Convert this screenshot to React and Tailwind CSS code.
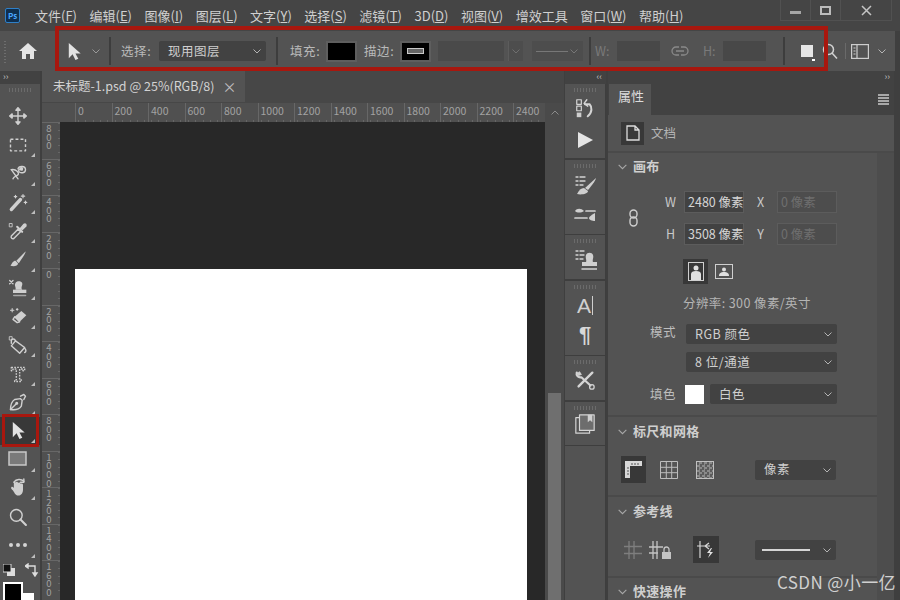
import React from "react";

const Ic = ({ children, s = 20, vb = 24, c = "" }) => (
  <svg width={s} height={s} viewBox={`0 0 ${vb} ${vb}`} fill="none" stroke="currentColor" strokeWidth="1.7" strokeLinecap="round" strokeLinejoin="round" className={c}>
    {children}
  </svg>
);
const Solid = "#cfcfcf";

const Chev = ({ c = "text-[#b4b4b4]", s = 10 }) => (
  <svg width={s} height={s} viewBox="0 0 10 10" fill="none" stroke="currentColor" strokeWidth="1" className={c}><path d="M1.5 3.5 5 7l3.5-3.5" /></svg>
);

const Arrow = ({ s = 20 }) => (
  <svg width={s} height={s} viewBox="0 0 20 20"><path d="M4 1v16l4-4 3 6 3-1.5-3-5.5h5.5z" fill="#e2e2e2" /></svg>
);

const icons = {
  move: <Ic><path d="M12 3v18M3 12h18" /><path d="M12 2l-2.5 3h5zM12 22l-2.5-3h5zM2 12l3-2.5v5zM22 12l-3-2.5v5z" fill={Solid} /></Ic>,
  marquee: <Ic><rect x="3" y="5" width="18" height="14" strokeDasharray="3.5 2.5" strokeLinecap="butt" /></Ic>,
  lasso: <Ic><path d="M4 8c6-1 10 4 8 6-2 2-5 2-6 5" /><path d="M4 8l8 11" /><path d="M12 7c1-4 9-4 9 1 0 4-6 5-8 2-1-2 2-4 4-2" /><circle cx="16" cy="7" r="1.5" fill={Solid} /></Ic>,
  wand: <Ic><path d="M4 21 15 9" strokeWidth="4" /><path d="M18 3v4M16 5h4M9 4v3M7.5 5.5h3M21 11v3M19.5 12.5h3" strokeWidth="1.4" /></Ic>,
  drop: <Ic><path d="M7 21c-2 1-4-1-3-3l8-8 3 3z" /><path d="M11 7l6 6" strokeWidth="2.5" /><path d="M15 9l4-5c2-1 3 0 2.500 2l-4 4z" fill={Solid} /><path d="M2 3h3v4H2z" strokeWidth="1" /></Ic>,
  brush: <Ic><path d="M10 14 21 3c1 1-6 11-8 14z" fill={Solid} stroke="none" /><path d="M9 14c-3 0-4 3-6 6 3 1 9 1 9-3z" fill={Solid} stroke="none" /></Ic>,
  stamp: <Ic><path d="M9 14c1-3-2-5 0-8 1-3 7-3 8 0 1 3-2 5 0 8z" fill={Solid} stroke="none" /><rect x="6" y="14" width="16" height="4" fill={Solid} stroke="none" /><path d="M7 21h14" stroke="#a5a5a5" strokeWidth="2" /><path d="M2 3l4 4M6 3 2 7" strokeWidth="1.600" /></Ic>,
  eraser: <Ic><path d="M8 13 16 6l6 5-8 8z" fill={Solid} stroke="none" /><path d="M8 13l-2 3 5 4 3-1z" /><path d="M5 3v4M3 5h4M11 3v2M10 4h2" strokeWidth="1.300" /></Ic>,
  bucket: <Ic><path d="M9 7l11 8-6 7-10-9z" /><path d="M9 7c-1-3-5-3-5 0v3" /><path d="M20 16c2 2 2 4 0 5" /><path d="M2 2h3v4H2z" strokeWidth="1" /></Ic>,
  type: <Ic><path d="M4 4h16v4h-2V6h-4v13h2v2H8v-2h2V6H6v2H4z" strokeDasharray="2 1.500" strokeLinecap="butt" /></Ic>,
  pen: <Ic><path d="M3 21c0-6 2-10 5-12l7-1 2 2-1 7c-2 3-6 5-13 4z" /><path d="M3 21l7-7" /><circle cx="10.500" cy="13.500" r="1" /><path d="M15 5l4-2 2 2-2 4" /></Ic>,
  rect: <svg width="20" height="16" viewBox="0 0 20 16"><rect x="1" y="1" width="17" height="13" fill="#7a7a7a" stroke="#c8c8c8" strokeWidth="1.500" /></svg>,
  hand: <Ic><path d="M6 15c-2-2-3-3-2-4s2 0 3 1V6c0-2 2-2 2 0 0-2 3-2 3 0 0-1 3-1 3 1 1-1 3 0 3 1v6c0 4-2 7-6 7-3 0-4-3-6-6z" fill={Solid} stroke="none" /><path d="M7 5c3-4 9-4 12-1" /><path d="M19 1v4h-4" /></Ic>,
  zoom: <Ic><circle cx="10" cy="10" r="7" /><path d="m15 15 6.500 6.500" strokeWidth="2.500" /></Ic>,
  dots: <svg width="20" height="6" viewBox="0 0 20 6" fill="#d4d4d4"><circle cx="3" cy="3" r="2" /><circle cx="10" cy="3" r="2" /><circle cx="17" cy="3" r="2" /></svg>,
};

const tools = [
  ["move", 0], ["marquee", 1], ["lasso", 1], ["wand", 1], ["drop", 1], ["brush", 1], ["stamp", 1], ["eraser", 1],
  ["bucket", 1], ["type", 1], ["pen", 1], ["arrow", 1], ["rect", 1], ["hand", 1], ["zoom", 0], ["dots", 1],
];

const Corner = ({ c = "right-[5px] bottom-[2px]" }) => (
  <span className={`absolute ${c} w-0 h-0 border-l-[4px] border-l-transparent border-b-[4px] border-b-[#bdbdbd]`} />
);

const menus = [
  ["文件", "F"], ["编辑", "E"], ["图像", "I"], ["图层", "L"], ["文字", "Y"], ["选择", "S"], ["滤镜", "T"], ["3D", "D"], ["视图", "V"], ["增效工具", null], ["窗口", "W"], ["帮助", "H"],
];

const Grip = () => <div className="h-[4px] w-[22px] mx-auto bg-[repeating-linear-gradient(90deg,#6b6b6b_0,#6b6b6b_1px,transparent_1px,transparent_3px)]" />;

const DarkSelect = ({ w, children, h = "h-[20px]", c = "" }) => (
  <div className={`${w} ${h} ${c} bg-[#424242] rounded-[2px] flex items-center justify-between pl-[9px] pr-[4px] text-[12.5px] text-[#cfcfcf]`}>
    <span className="flex-1">{children}</span>
    <Chev />
  </div>
);

const SectionHead = ({ children }) => (
  <div className="flex items-center h-[16px] pl-[9px] gap-[5px]">
    <Chev c="text-[#a8a8a8]" s={11} />
    <span className="text-[13px] font-bold text-[#cfcfcf] tracking-[0.3px] leading-[16px]">{children}</span>
  </div>
);

const Sep = ({ c = "" }) => <div className={`w-[2px] h-[28px] bg-[#3d3d3d] ${c}`} />;

const xTicks = ["0", "200", "400", "600", "800", "1000", "1200", "1400", "1600", "1800", "2000", "2200", "2400"];
const yTicks = ["800", "600", "400", "200", "0", "200", "400", "600", "800", "1000", "1200", "1400", "1600"];

const Options = () => (
  <div className="h-[40px] w-[895px] bg-[#535353] flex items-center text-[#b9b9b9] text-[12.5px] shrink-0">
    <div className="ml-[4px] w-[2px] h-[24px] bg-[repeating-linear-gradient(0deg,#6e6e6e_0,#6e6e6e_1px,transparent_1px,transparent_3px)]" />
    <svg width="18" height="16" viewBox="0 0 18 16" className="ml-[13px]"><path d="M9 0 0 8h3v8h4v-5h4v5h4V8h3z" fill="#e4e4e4" /></svg>
    <div className="ml-[28px]"><Arrow s={19} /></div>
    <Chev c="ml-[7px] text-[#9a9a9a]" />
    <Sep c="ml-[8px]" />
    <span className="ml-[10px] tracking-[0.6px] w-[30px] whitespace-nowrap">选择:</span>
    <DarkSelect w="w-[107px]" c="ml-[8px]"><span className="tracking-[0.5px]">现用图层</span></DarkSelect>
    <Sep c="ml-[10px]" />
    <span className="ml-[12px] tracking-[0.6px] w-[30px] whitespace-nowrap">填充:</span>
    <div className="ml-[6px] w-[31px] h-[21px] bg-black border-[2px] border-[#5e5e5e]" />
    <span className="ml-[7px] tracking-[0.6px] w-[30px] whitespace-nowrap">描边:</span>
    <div className="ml-[6px] w-[31px] h-[21px] bg-black border-[2px] border-[#5e5e5e] flex items-center justify-center">
      <div className="w-[17px] h-[6px] border border-[#c9c9c9] bg-[#666]" />
    </div>
    <div className="ml-[7px] w-[66px] h-[20px] bg-[#4a4a4a]" />
    <div className="ml-[4px] w-[15px] h-[20px] bg-[#4d4d4d] border-l border-[#5c5c5c] flex items-center justify-center"><Chev c="text-[#6f6f6f]" /></div>
    <div className="ml-[9px] w-[51px] h-[20px] bg-[#4d4d4d] flex items-center justify-between px-[4px]">
      <div className="w-[32px] h-[1px] bg-[#777]" /><Chev c="text-[#777]" />
    </div>
    <Sep c="ml-[6px]" />
    <span className="ml-[4px] w-[14px] text-[#7a7a7a]">W:</span>
    <div className="ml-[8px] w-[43px] h-[20px] bg-[#484848]" />
    <svg width="18" height="10" viewBox="0 0 18 10" fill="none" stroke="#8a8a8a" strokeWidth="1.300" className="ml-[11px]"><path d="M8 1H5a4 4 0 0 0 0 8h3M10 1h3a4 4 0 0 1 0 8h-3M5 5h8" /></svg>
    <span className="ml-[14px] w-[12px] text-[#7a7a7a]">H:</span>
    <div className="ml-[8px] w-[43px] h-[20px] bg-[#484848]" />
    <Sep c="ml-[17px]" />
    <div className="ml-[16px] relative w-[12px] h-[12px] bg-[#e6e6e6]"><span className="absolute -right-[2px] -bottom-[4px] w-[3px] h-[2px] bg-white" /></div>
    <svg width="16" height="16" viewBox="0 0 16 16" fill="none" stroke="#d2d2d2" strokeWidth="1.500" className="ml-[9px]"><circle cx="6.500" cy="6.500" r="5" /><path d="m10 10 5 5.500" /></svg>
    <div className="ml-[7px] w-[1px] h-[16px] bg-[#6a6a6a]" />
    <svg width="18" height="15" viewBox="0 0 18 15" fill="none" stroke="#cdcdcd" strokeWidth="1.200" className="ml-[5px]"><rect x=".6" y=".6" width="16.800" height="13.800" /><path d="M6 .6v13.800M2.500 4h2M2.500 7h2M2.500 10h2" /></svg>
    <Chev c="ml-[8px] text-[#b5b5b5]" />
  </div>
);

const Toolbar = () => (
  <div className="w-[40px] shrink-0 bg-[#535353] flex flex-col">
    <div className="h-[13px] shrink-0 bg-[#424242] text-[9px] leading-[11px] text-[#c0c0c0] pl-[3px]">››</div>
    <div className="h-[18px] shrink-0 pt-[4px]"><Grip /></div>
    {tools.map(([n, t]) => (
      <div key={n} className={`h-[28.6px] shrink-0 w-full relative flex items-center justify-center pr-[4px] text-[#d0d0d0] ${n === "arrow" ? "bg-[#383838]" : ""}`}>
        {n === "arrow" ? <Arrow s={19} /> : icons[n]}
        {t ? <Corner /> : null}
      </div>
    ))}
    <div className="h-[40px] shrink-0 flex flex-col pl-[3px]">
      <div className="flex items-center gap-[10px] h-[20px] shrink-0">
        <svg width="12" height="12" viewBox="0 0 12 12"><rect x="4" y="4" width="8" height="8" fill="#ddd" /><rect x="0" y="0" width="8" height="8" fill="#111" stroke="#ddd" /></svg>
        <svg width="14" height="14" viewBox="0 0 14 14" fill="none" stroke="#ddd" strokeWidth="1.400"><path d="M1 3h9v9M0 3l3-2v4zM10 13l-2-3h4z" /></svg>
      </div>
      <div className="relative mt-[2px] h-[18px] shrink-0">
        <div className="absolute left-[20px] top-[11px] w-[11px] h-[11px] bg-white" />
        <div className="absolute left-0 top-0 w-[20px] h-[20px] bg-black border-[2px] border-white" />
      </div>
    </div>
  </div>
);

const DocArea = () => (
  <div className="w-[522px] ml-[2px] shrink-0 flex flex-col bg-[#4a4a4a]">
    <div className="h-[32px] shrink-0 bg-[#474747] flex">
      <div className="w-[203px] h-[31px] bg-[#535353] flex items-center pl-[11px] text-[12.5px] text-[#d2d2d2] whitespace-nowrap">
        未标题-1.psd @ 25%(RGB/8)
        <span className="ml-[8px] text-[#bdbdbd] text-[14px]">×</span>
      </div>
    </div>
    <div className="flex-1 flex min-h-0">
      <div className="w-[503px] shrink-0 flex flex-col">
        <div className="h-[19px] shrink-0 bg-[#505050] flex pl-[33px] overflow-hidden">
          {xTicks.map((t) => (
            <div key={t} className="w-[36.5px] shrink-0 border-l border-[#676767] flex flex-col justify-between pl-[2px]">
              <span className="text-[10.5px] leading-[15px] text-[#a2a2a2]">{t}</span>
              <div className="h-[2px] bg-[repeating-linear-gradient(90deg,#666_0,#666_1px,transparent_1px,transparent_7.300px)]" />
            </div>
          ))}
        </div>
        <div className="flex-1 flex min-h-0">
          <div className="w-[18px] shrink-0 bg-[#505050] overflow-hidden">
            {yTicks.map((t, i) => (
              <div key={i} className="h-[36.5px] border-t border-[#676767] flex flex-col items-center pt-[1px] pr-[4px] relative">
                <span className="w-[7px] break-all text-center text-[9.5px] leading-[8.700px] text-[#a2a2a2]">{t}</span>
                <div className="absolute right-0 top-0 bottom-0 w-[2px] bg-[repeating-linear-gradient(180deg,#666_0,#666_1px,transparent_1px,transparent_7.300px)]" />
              </div>
            ))}
          </div>
          <div className="flex-1 bg-[#282828] pl-[15px] pt-[147px] overflow-hidden">
            <div className="w-[452px] h-[400px] bg-white" />
          </div>
        </div>
      </div>
      <div className="w-[19px] shrink-0 bg-[#4a4a4a] flex flex-col items-center pt-[5px]">
        <svg width="10" height="10" viewBox="0 0 10 10" fill="none" stroke="#8c8c8c" strokeWidth="1"><path d="M1.500 6.500 5 3l3.500 3.500" /></svg>
        <div className="mt-[275px] w-[13px] flex-1 bg-[#6f6f6f]" />
      </div>
    </div>
  </div>
);

const DockGroup = ({ h, children, gap = "gap-[9px]" }) => (
  <div className={`${h} shrink-0 w-[40px] bg-[#535353] mb-[1.500px] pt-[4px] flex flex-col`}>
    <Grip />
    <div className={`flex flex-col items-center pt-[5px] ${gap} text-[#d4d4d4]`}>{children}</div>
  </div>
);

const Dock = () => (
  <div className="w-[41px] ml-[1px] shrink-0 flex flex-col bg-[#3e3e3e]">
    <div className="h-[13px] shrink-0 bg-[#424242] text-[9px] leading-[11px] text-[#c0c0c0] text-right pr-[4px]">‹‹</div>
    <DockGroup h="h-[74px]" gap="gap-[12px]">
      <Ic s={22}><path d="M3 3h5v5H3zM3 10h5v5H3z" strokeWidth="1.300" /><rect x="3" y="17" width="5" height="5" fill={Solid} stroke="none" /><path d="M12 8h5c3 3 3 9-2 13" strokeWidth="2.200" /><path d="m14 3-3 4 4 3" strokeWidth="1.500" /></Ic>
      <svg width="18" height="18" viewBox="0 0 18 18"><path d="M2 1v16l15-8z" fill="#e4e4e4" /></svg>
    </DockGroup>
    <DockGroup h="h-[74px]" gap="gap-[6px]">
      <Ic s={24}><path d="M3 4h2M7 4h5M3 8h2M7 8h5M3 12h2M7 12h3" strokeWidth="1.300" /><path d="M12 15 23 5c0 2-6 10-8 12z" fill={Solid} stroke="none" /><path d="M11 15c-3 0-5 2-7 6 4 1 11 0 11-3z" fill={Solid} stroke="none" /></Ic>
      <Ic s={24}><path d="M2 8c2-3 6-3 9 0-3 2-7 2-9 0z" fill={Solid} stroke="none" /><path d="M13 8h9M2 15h12" strokeWidth="1.700" /><path d="M22 10c-4 2-6 4-6 5 0 2 3 3 6 3z" fill={Solid} stroke="none" /></Ic>
    </DockGroup>
    <DockGroup h="h-[44px]">
      <div className="-mt-[1px]"><Ic s={24}><path d="M3 4h2M7 4h4M3 8h2M7 8h4M3 12h2M7 12h3" strokeWidth="1.300" /><path d="M13 15c1-2-1-4 0-7 1-3 6-3 7 0 1 3-1 5 0 7z" fill={Solid} stroke="none" /><rect x="9" y="15" width="15" height="4" fill={Solid} stroke="none" /><path d="M9 22h15" strokeWidth="1.500" /></Ic></div>
    </DockGroup>
    <DockGroup h="h-[74px]" gap="gap-[5px]">
      <div className="flex items-center text-[#d0d0d0] text-[21px] leading-[24px] font-['Liberation_Sans',sans-serif]">A<span className="w-[1px] h-[19px] bg-[#cfcfcf] ml-[1px]" /></div>
      <span className="text-[22px] leading-[24px] font-bold text-[#d8d8d8] font-['Liberation_Sans',sans-serif]">¶</span>
    </DockGroup>
    <DockGroup h="h-[44px]">
      <Ic s={22}><path d="M20 4 5 19" strokeWidth="2.600" /><path d="M3 4a4 4 0 0 0 5 5l10 9" strokeWidth="2.400" /><path d="M3 4l2 3 3-1-2-3" fill={Solid} strokeWidth="1" /><circle cx="19.500" cy="19.500" r="2.500" strokeWidth="1.400" /></Ic>
    </DockGroup>
    <DockGroup h="h-[43px]">
      <div className="-mt-[2px]"><Ic s={22}><rect x="2" y="5" width="15" height="17" strokeWidth="1.300" /><rect x="6" y="2" width="16" height="17" fill="#6d6d6d" strokeWidth="1.300" /><path d="M15 2h5v8l-2.500-2-2.500 2z" fill={Solid} stroke="none" /></Ic></div>
    </DockGroup>
    <div className="flex-1 w-[40px] bg-[#535353]" />
  </div>
);

const Input = ({ children, dim }) => (
  <div className={`w-[60px] h-[22px] flex items-center pl-[3px] text-[12.5px] whitespace-nowrap border border-[#5c5c5c] ${dim ? "bg-[#4d4d4d] text-[#6f6f6f]" : "bg-[#424242] text-[#d6d6d6]"}`}>{children}</div>
);

const Panel = () => (
  <div className="w-[286px] ml-[2px] shrink-0 flex flex-col bg-[#4a4a4a]">
    <div className="h-[13px] shrink-0 bg-[#424242] text-[9px] leading-[11px] text-[#c0c0c0] text-right pr-[4px]">››</div>
    <div className="h-[31px] shrink-0 bg-[#424242] flex justify-between items-center pr-[5px]">
      <div className="w-[42px] ml-[1px] h-full bg-[#535353] pl-[9px] pt-[2px] text-[13px] text-[#dcdcdc]">属性</div>
      <div className="flex flex-col gap-[1px]">
        {[0, 1, 2, 3].map((i) => <div key={i} className="w-[11px] h-[2px] bg-[#a8a8a8]" />)}
      </div>
    </div>
    <div className="h-[36px] shrink-0 bg-[#535353] flex items-center pl-[13px] gap-[7px] text-[12.5px] text-[#b4b4b4]">
      <div className="w-[23px] h-[23px] bg-[#383838] flex items-center justify-center">
        <svg width="14" height="16" viewBox="0 0 14 16" fill="none" stroke="#dcdcdc" strokeWidth="1.300"><path d="M1 1h8l4 4v10H1zM9 1v4h4" /></svg>
      </div>
      文档
    </div>
    <div className="flex-1 flex mt-[2px] min-h-0">
      <div className="w-[269px] shrink-0 flex flex-col">
        <div className="h-[262px] shrink-0 bg-[#535353] pt-[5px] flex flex-col">
          <SectionHead>画布</SectionHead>
          <div className="mt-[17px] flex">
            <div className="w-[26px] ml-[20px] flex items-center text-[#cfcfcf]">
              <svg width="12" height="18" viewBox="0 0 12 18" fill="none" stroke="currentColor" strokeWidth="1.400"><rect x="2" y="1" width="7" height="8" rx="3.500" /><rect x="2" y="8" width="7" height="9" rx="3.500" /></svg>
            </div>
            <div className="flex flex-col gap-[10px] text-[12.5px] text-[#c9c9c9]">
              <div className="flex items-center">
                <span className="w-[30px] pl-[11px]">W</span><Input>2480 像素</Input>
                <span className="w-[33px] text-center">X</span><Input dim>0 像素</Input>
              </div>
              <div className="flex items-center">
                <span className="w-[30px] pl-[12px]">H</span><Input>3508 像素</Input>
                <span className="w-[33px] text-center">Y</span><Input dim>0 像素</Input>
              </div>
            </div>
          </div>
          <div className="mt-[14px] ml-[75px] flex items-center gap-[7px]">
            <div className="w-[25px] h-[25px] bg-[#383838] flex items-center justify-center">
              <svg width="16" height="19" viewBox="0 0 16 19"><rect x=".5" y=".5" width="15" height="18" fill="none" stroke="#cfcfcf" /><circle cx="8" cy="6" r="2.500" fill="#e0e0e0" /><path d="M3 18v-6c0-2 2-3 5-3s5 1 5 3v6z" fill="#e0e0e0" /></svg>
            </div>
            <svg width="18" height="15" viewBox="0 0 18 15"><rect x=".5" y=".5" width="17" height="14" fill="none" stroke="#cfcfcf" /><circle cx="9" cy="5.500" r="2" fill="#e0e0e0" /><path d="M4 12c0-3 2-4 5-4s5 1 5 4z" fill="#e0e0e0" /></svg>
          </div>
          <div className="mt-[10px] ml-[75px] text-[12.5px] text-[#b5b5b5] tracking-[0.4px] h-[18px] leading-[18px]">分辨率: 300 像素/英寸</div>
          <div className="mt-[12px] flex items-center">
            <span className="ml-[42px] w-[36px] text-[12.5px] text-[#bdbdbd] tracking-[0.4px] -mt-[3px]">模式</span>
            <DarkSelect w="w-[151px]"><span className="tracking-[0.5px]">RGB 颜色</span></DarkSelect>
          </div>
          <div className="mt-[8px] ml-[78px]"><DarkSelect w="w-[151px]"><span className="tracking-[0.5px]">8 位/通道</span></DarkSelect></div>
          <div className="mt-[12px] flex items-center">
            <span className="ml-[42px] w-[35px] text-[12.5px] text-[#bdbdbd] tracking-[0.4px]">填色</span>
            <div className="w-[19px] h-[19px] bg-white" />
            <DarkSelect w="w-[127px]" c="ml-[6px]"><span className="tracking-[0.5px]">白色</span></DarkSelect>
          </div>
        </div>
        <div className="h-[78px] shrink-0 mt-[2px] bg-[#535353] pt-[6px]">
          <SectionHead>标尺和网格</SectionHead>
          <div className="mt-[17px] flex items-center pl-[13px]">
            <div className="w-[25px] h-[27px] bg-[#383838] flex items-center justify-center">
              <svg width="17" height="17" viewBox="0 0 17 17"><path d="M0 0h17v5H5v12H0z" fill="#d8d8d8" /><path d="M7 2v2M10 2v2M13 2v2M2 7h2M2 10h2M2 13h2" stroke="#555" /></svg>
            </div>
            <svg width="18" height="18" viewBox="0 0 18 18" fill="none" stroke="#bcbcbc" className="ml-[14px]"><path d="M.5.500h17v17H.5zM6.300.500v17M11.700.500v17M.5 6.300h17M.5 11.700h17" /></svg>
            <div className="ml-[18px] w-[18px] h-[18px] border border-[#c0c0c0] bg-[repeating-conic-gradient(#8a8a8a_0_25%,#5c5c5c_0_50%)] bg-[length:5px_5px]" />
            <DarkSelect w="w-[81px]" c="ml-[41px]"><span className="tracking-[0.5px]">像素</span></DarkSelect>
          </div>
        </div>
        <div className="h-[79px] shrink-0 mt-[2px] bg-[#535353] pt-[6px]">
          <SectionHead>参考线</SectionHead>
          <div className="mt-[17px] flex items-center pl-[13px]">
            <svg width="24" height="20" viewBox="0 0 24 20" fill="none" stroke="#7e7e7e" strokeWidth="1.300"><path d="M3 6.500h18M3 13.500h18M8 1v18M13 1v18" /></svg>
            <svg width="24" height="20" viewBox="0 0 24 20" fill="none" stroke="#c4c4c4" strokeWidth="1.300" className="ml-[3px]"><path d="M1 7h14M1 13h9M5 1v18M9 1v18" /><rect x="14" y="12" width="9" height="7" fill="#c4c4c4" stroke="none" /><path d="M16 12V9.500a2.500 2.500 0 0 1 5 0V12" /></svg>
            <div className="ml-[21px] w-[26px] h-[27px] bg-[#383838] flex items-center justify-center">
              <svg width="20" height="20" viewBox="0 0 20 20" fill="none" stroke="#d6d6d6" strokeWidth="1.200"><path d="M4 1v17M1 6h13M9 6l4-3M9 6l4 3" /><path d="M15 8l-4 5h3l-2 5 5-6h-3l2-4z" fill="#e0e0e0" stroke="none" /></svg>
            </div>
            <div className="ml-[36px] w-[81px] h-[20px] bg-[#424242] rounded-[2px] flex items-center justify-between pl-[7px] pr-[4px]">
              <div className="w-[48px] h-[2px] bg-[#d4d4d4]" /><Chev />
            </div>
          </div>
        </div>
        <div className="flex-1 mt-[2px] bg-[#535353] pt-[5px]">
          <SectionHead>快速操作</SectionHead>
        </div>
      </div>
      <div className="flex-1 bg-[#4d4d4d]" />
    </div>
  </div>
);

export default function App() {
  return (
    <div className="relative w-[900px] h-[600px] overflow-hidden bg-[#3f3f3f] flex flex-col font-['Noto_Sans_CJK_SC','Liberation_Sans',sans-serif]">
      <div className="h-[31px] shrink-0 bg-[#454545] flex items-center pl-[5px] relative">
        <div className="w-[15px] h-[15px] rounded-[2px] bg-[#0f2f4f] border border-[#2f80c8] flex items-center justify-center text-[8px] font-bold leading-none text-[#49a8ff]">Ps</div>
        <div className="ml-[15px] flex gap-[12.500px] text-[13px] text-[#d0d0d0] whitespace-nowrap">
          {menus.map(([m, k]) => (
            <span key={m}>{m}{k ? <span>(<span className="underline">{k}</span>)</span> : null}</span>
          ))}
        </div>
        <div className="absolute left-[780px] top-0 w-[112px] h-[21px] border border-[#515151] border-t-0 flex items-center text-[#bcbcbc]">
          <div className="w-[30px] h-full flex items-center justify-center border-r border-[#515151]"><div className="w-[11px] h-[3px] mt-[4px] bg-[#a5a5a5]" /></div>
          <div className="w-[30px] h-full flex items-center justify-center border-r border-[#515151]"><div className="w-[11px] h-[9px] border-[2px] border-[#bbb]" /></div>
          <div className="flex-1 flex items-center justify-center">
            <svg width="11" height="11" viewBox="0 0 11 11" stroke="#c4c4c4" strokeWidth="1.500"><path d="M1 1l9 9M10 1l-9 9" /></svg>
          </div>
        </div>
      </div>
      <Options />
      <div className="flex-1 flex min-h-0 w-[895px]">
        <Toolbar />
        <DocArea />
        <Dock />
        <Panel />
      </div>

      <div className="absolute left-[55px] top-[26px] w-[773px] h-[45px] border-[4px] border-[#a8170e]" />
      <div className="absolute left-[2px] top-[414px] w-[37px] h-[33px] border-[3px] border-[#a8170e]" />
      <div className="absolute left-[777px] top-[570px] text-[17px] leading-[24px] tracking-[0.4px] text-[#d0d0d0] whitespace-nowrap">CSDN @小一亿</div>
    </div>
  );
}
